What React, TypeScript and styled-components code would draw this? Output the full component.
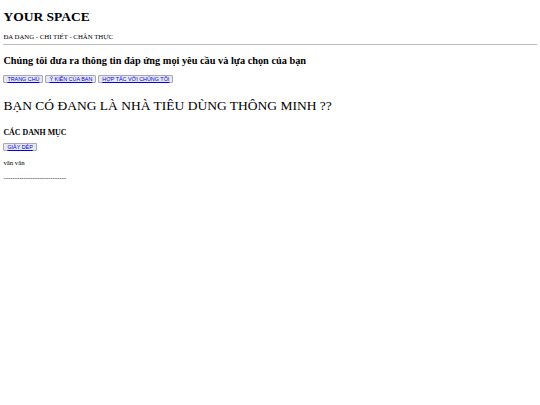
import styled, { createGlobalStyle } from "styled-components";

const GlobalStyle = createGlobalStyle`
  body {
    margin: 3px 3.4px;
    font-family: "Liberation Serif", "Times New Roman", serif;
    color: #000;
    background: #fff;
  }
`;

const Title = styled.h1`
  font-size: 13.5px;
  font-weight: 700;
  margin: 6px 0 0;
`;

const Tagline = styled.p`
  font-size: 6.8px;
  margin: 8px 0 0;
`;

const Rule = styled.hr`
  border: none;
  border-top: 1px solid #bbb;
  margin: 4px 0 0;
`;

const Lead = styled.h3`
  font-size: 10.3px;
  font-weight: 700;
  margin: 10px 0 0;
`;

const Nav = styled.nav`
  display: flex;
  gap: 2px;
  margin-top: 9px;
`;

const NavButton = styled.button`
  font-family: "Liberation Sans", Arial, sans-serif;
  font-size: 5.4px;
  padding: 0 3px;
  background: #e9e9ed;
  border: 1px solid #a8a8b4;
  border-radius: 1px;
  line-height: 6px;
  cursor: pointer;

  a {
    color: #0000ee;
    text-decoration: underline;
  }
`;

const Question = styled.h2`
  font-size: 13.5px;
  font-weight: 400;
  margin: 15px 0 0;
`;

const SectionTitle = styled.h4`
  font-size: 7.9px;
  font-weight: 700;
  margin: 14px 0 0;
`;

const Categories = styled.div`
  display: flex;
  margin-top: 6px;
`;

const Note = styled.p`
  font-size: 6.75px;
  margin: 8px 0 0;
`;

const Divider = styled.p`
  font-size: 6.75px;
  margin: 8px 0 0;
`;

export default function App() {
  return (
    <>
      <GlobalStyle />
      <header>
        <Title>YOUR SPACE</Title>
        <Tagline>ĐA DẠNG - CHI TIẾT - CHÂN THỰC</Tagline>
        <Rule />
      </header>
      <main>
        <Lead>Chúng tôi đưa ra thông tin đáp ứng mọi yêu cầu và lựa chọn của bạn</Lead>
        <Nav>
          <NavButton>
            <a href="#">TRANG CHỦ</a>
          </NavButton>
          <NavButton>
            <a href="#">Ý KIẾN CỦA BẠN</a>
          </NavButton>
          <NavButton>
            <a href="#">HỢP TÁC VỚI CHÚNG TÔI</a>
          </NavButton>
        </Nav>
        <Question>BẠN CÓ ĐANG LÀ NHÀ TIÊU DÙNG THÔNG MINH ??</Question>
        <SectionTitle>CÁC DANH MỤC</SectionTitle>
        <Categories>
          <NavButton>
            <a href="#">GIÀY DÉP</a>
          </NavButton>
        </Categories>
        <Note>vân vân</Note>
        <Divider>----------------------------</Divider>
      </main>
    </>
  );
}
